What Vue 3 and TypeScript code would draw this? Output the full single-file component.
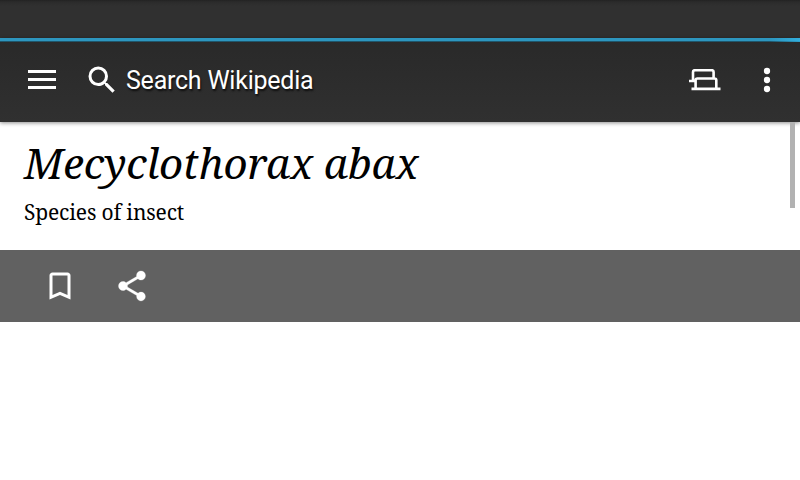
<script setup lang="ts">
const placeholder = 'Search Wikipedia'
const article = { title: 'Mecyclothorax abax', description: 'Species of insect' }
</script>

<template>
  <main class="screen">
    <div class="status"></div>
    <header class="toolbar">
      <div class="progress"></div>
      <svg class="menu" viewBox="0 0 28 19"><path d="M0 0h28v3H0zM0 8h28v3H0zM0 16h28v3H0z" /></svg>
      <svg class="search-icon" viewBox="0 0 24 24"><path d="M15.5 14h-.79l-.28-.27A6.47 6.47 0 0 0 16 9.5 6.5 6.5 0 1 0 9.5 16c1.61 0 3.09-.59 4.23-1.57l.27.28v.79l5 4.99L20.49 19zm-6 0a4.5 4.5 0 1 1 0-9 4.5 4.5 0 0 1 0 9z" /></svg>
      <span class="search">{{ placeholder }}</span>
      <svg class="tabs" viewBox="0 0 32 22">
        <path d="M6 12H0M4 12V3Q4 1.2 5.9 1.2H22.7Q24.6 1.2 24.6 3V9.5M6.6 20V11.3Q6.6 9.5 8.4 9.5H25.5Q27.3 9.5 27.3 11.3V20M2.5 19.9H31.5" />
      </svg>
      <svg class="more" viewBox="0 0 8 26"><circle cx="4" cy="4" r="3.15" /><circle cx="4" cy="13" r="3.15" /><circle cx="4" cy="22" r="3.15" /></svg>
    </header>
    <section class="heading">
      <h1>{{ article.title }}</h1>
      <p>{{ article.description }}</p>
      <div class="scrollbar"></div>
    </section>
    <nav class="actions">
      <svg viewBox="0 0 24 24"><path d="M17 3H7c-1.1 0-1.99.9-1.99 2L5 21l7-3 7 3V5c0-1.1-.9-2-2-2zm0 15l-5-2.18L7 18V5h10z" /></svg>
      <svg viewBox="0 0 24 24"><path stroke="#fff" stroke-width=".2" d="M18 16.08c-.76 0-1.44.3-1.96.77L8.91 12.7c.05-.23.09-.46.09-.7s-.04-.47-.09-.7l7.05-4.11c.54.5 1.25.81 2.04.81 1.66 0 3-1.34 3-3s-1.34-3-3-3-3 1.34-3 3c0 .24.04.47.09.7L8.04 9.81C7.5 9.31 6.79 9 6 9c-1.66 0-3 1.34-3 3s1.34 3 3 3c.79 0 1.5-.31 2.04-.81l7.12 4.16c-.05.21-.08.43-.08.65 0 1.61 1.31 2.92 2.92 2.92s2.92-1.31 2.92-2.92-1.31-2.92-2.92-2.92z" /></svg>
    </nav>
  </main>
</template>

<style>
body { background: #fff; }
</style>

<style scoped>
.screen { width: 800px; height: 480px; overflow: hidden; background: #fff; display: flex; flex-direction: column; }
.status { height: 38px; flex: none; background: linear-gradient(#222 0, #2b2b2b 2px, #303030 6px, #303030 100%); }
.toolbar { position: relative; z-index: 1; height: 84px; flex: none; box-sizing: border-box; padding: 2px 29px 0 28px; display: flex; align-items: center; background: linear-gradient(#292929, #303030); box-shadow: 0 1px 4px rgba(0, 0, 0, .45); }
.progress { position: absolute; inset: 0 0 auto; height: 4px; background: linear-gradient(90deg, transparent 770px, rgba(51, 181, 229, .8) 100%), linear-gradient(#2d96bf 3px, #20566b 3px); }
svg { display: block; flex: none; fill: #fff; }
.menu { width: 28px; height: 19px; margin-top: -3px; }
.search-icon { width: 36px; height: 36px; margin: -2px 0 0 28px; }
.search { margin-left: 6px; font: 25px/32px Roboto, sans-serif; letter-spacing: -.23px; color: #fff; white-space: nowrap; text-shadow: 1px 2px 2px rgba(0, 0, 0, .7); }
.tabs { width: 32px; height: 22px; margin: -2px 0 0 auto; fill: none; stroke: #fff; stroke-width: 2.6; }
.more { width: 8px; height: 26px; margin: -2px 0 0 42px; }
.heading { position: relative; height: 128px; flex: none; box-sizing: border-box; padding: 13px 24px 0; color: #000; font-family: "Noto Serif", "DejaVu Serif Condensed", "DejaVu Serif", serif; }
h1 { margin: 0; font-size: 42px; line-height: 56px; font-style: italic; font-weight: 400; letter-spacing: -.14px; white-space: nowrap; }
p { margin: 7px 0 0; font-size: 21px; line-height: 28px; letter-spacing: -.16px; white-space: nowrap; }
.scrollbar { position: absolute; z-index: 2; top: 0; right: 5px; width: 5px; height: 86px; background: #b2b2b2; }
.actions { height: 72px; flex: none; box-sizing: border-box; padding-left: 42px; display: flex; align-items: center; gap: 36px; background: #616161; }
.actions svg { width: 36px; height: 36px; }
</style>
